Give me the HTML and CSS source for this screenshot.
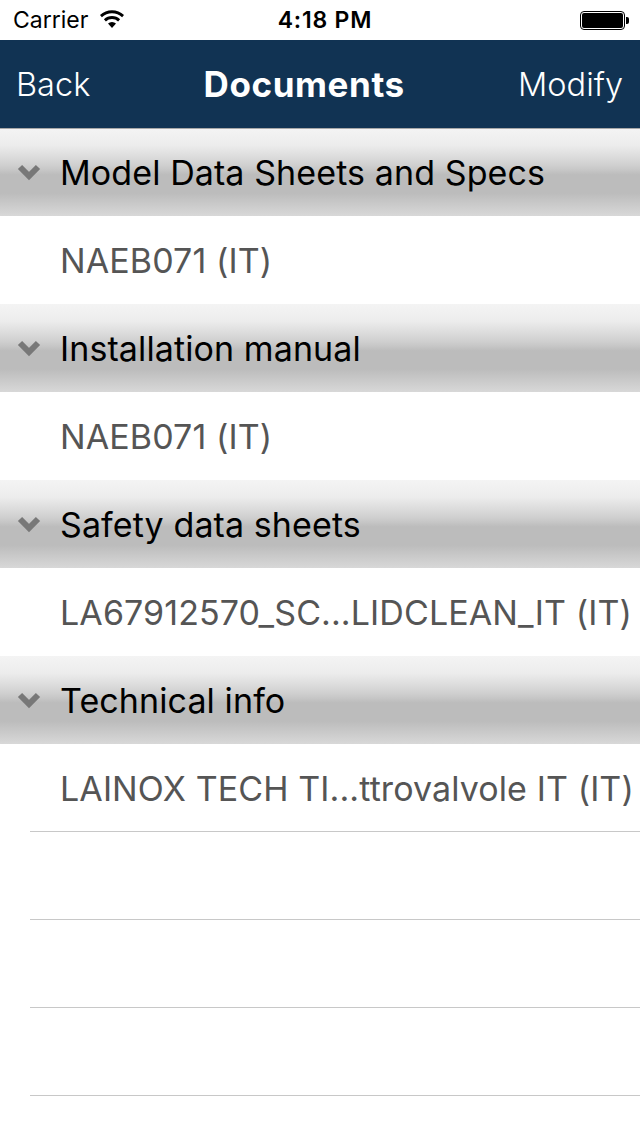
FILE: index.html
```html
<html><head>
    <title>Documents</title>
    <meta name="viewport" content="width=device-width, initial-scale=1">
    <link rel="stylesheet" href="styles.css">
    </head>
    <body>
    <div class="statusbar">
        <div class="status-left">
            <span>Carrier</span>
            <svg class="wifi" width="26" height="20" viewBox="0 0 26 20"><path d="M13 18l-4-4.400a5.800 5.800 0 0 1 8 0z"/><path d="M6.900 11.400l-2-2.100a11.800 11.800 0 0 1 16.200 0l-2 2.100a9 9 0 0 0-12.200 0z"/><path d="M2.900 7.200L1 5.100a17.600 17.600 0 0 1 24 0l-1.900 2.100a14.800 14.800 0 0 0-20.200 0z"/></svg>
        </div>
        <div class="status-time">4:18 PM</div>
        <div class="battery"><div class="battery-body"><div class="battery-fill"></div></div><div class="battery-tip"></div></div>
    </div>
    <div class="navbar">
        <span class="nav-btn">Back</span>
        <span class="nav-title">Documents</span>
        <span class="nav-btn">Modify</span>
    </div>

    <div class="section"><svg class="chevron" width="24" height="17" viewBox="0 0 24 17"><path d="M3 3l9 9 9-9" /></svg><span>Model Data Sheets and Specs</span></div>
    <div class="row">NAEB071 (IT)</div>
    <div class="section"><svg class="chevron" width="24" height="17" viewBox="0 0 24 17"><path d="M3 3l9 9 9-9" /></svg><span>Installation manual</span></div>
    <div class="row">NAEB071 (IT)</div>
    <div class="section"><svg class="chevron" width="24" height="17" viewBox="0 0 24 17"><path d="M3 3l9 9 9-9" /></svg><span>Safety data sheets</span></div>
    <div class="row">LA67912570_SC...LIDCLEAN_IT (IT)</div>
    <div class="section"><svg class="chevron" width="24" height="17" viewBox="0 0 24 17"><path d="M3 3l9 9 9-9" /></svg><span>Technical info</span></div>
    <div class="row row-line">LAINOX TECH TI...ttrovalvole IT (IT)</div>
    <div class="row row-line"></div>
    <div class="row row-line"></div>
    <div class="row row-line"></div>
    </body>
    </html>
```
FILE: styles.css
```css
html {
    background-color: #ffffff;
}
body {
    margin: 0;
    font-family: Inter, "Liberation Sans", sans-serif;
    overflow: hidden;
}
.statusbar {
    height: 40px;
    display: grid;
    grid-template-columns: 1fr auto 1fr;
    align-items: center;
    padding: 0 11px 0 13px;
    box-sizing: border-box;
    font-size: 23px;
    color: #000000;
}
.status-left {
    display: flex;
    align-items: center;
    gap: 11px;
}
.wifi {
    fill: #000000;
}
.status-time {
    font-weight: 600;
    font-size: 23px;
    letter-spacing: 0.8px;
    padding-left: 8px;
}
.battery {
    display: flex;
    align-items: center;
    justify-content: flex-end;
}
.battery-body {
    width: 45px;
    height: 19px;
    border: 1px solid #000000;
    border-radius: 4px;
    padding: 1px;
    box-sizing: border-box;
}
.battery-fill {
    height: 100%;
    background-color: #000000;
    border-radius: 2px;
}
.battery-tip {
    width: 3px;
    height: 7px;
    margin-left: 1px;
    background-color: #000000;
    border-radius: 0 2px 2px 0;
}
.navbar {
    height: 88px;
    background-color: #113353;
    color: #ffffff;
    display: flex;
    align-items: center;
    justify-content: space-between;
    padding: 0 17px 0 16px;
    box-sizing: border-box;
    font-size: 32.5px;
    position: relative;
    box-shadow: 0 1px 0 #a8a8a8;
}
.nav-btn {
    font-weight: 300;
}
.nav-title {
    font-weight: 700;
    font-size: 35px;
    letter-spacing: 0.6px;
}
.section {
    height: 88px;
    display: flex;
    align-items: center;
    font-size: 34px;
    letter-spacing: 0.1px;
    color: #000000;
    background: linear-gradient(to bottom, #f4f4f4 0%, #ececec 20%, #d0d0d0 42%, #c6c6c6 48%, #bcbcbc 53%, #bcbcbc 74%, #d8d8d8 100%);
}
.chevron {
    fill: none;
    stroke: #787878;
    stroke-width: 6;
    margin: 0 19px 0 17px;
}
.row {
    height: 88px;
    display: flex;
    align-items: center;
    padding-left: 60px;
    box-sizing: border-box;
    font-size: 34px;
    letter-spacing: 0.1px;
    color: #555555;
    white-space: nowrap;
}
.row-line {
    position: relative;
}
.row-line::after {
    content: "";
    position: absolute;
    left: 30px;
    right: 0;
    bottom: 0;
    height: 1px;
    background-color: #c8c8c8;
}
```
